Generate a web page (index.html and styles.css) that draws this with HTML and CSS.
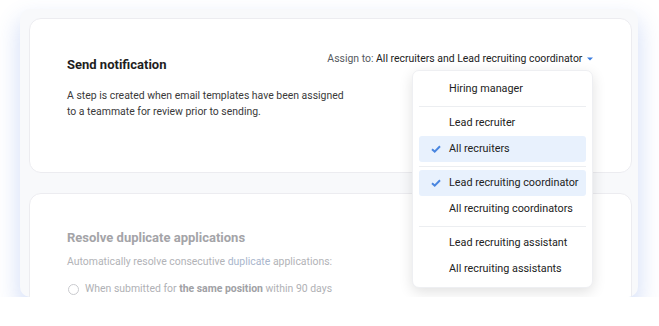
FILE: index.html
```html
<!DOCTYPE html>
<html lang="en">
  <head>
    <meta charset="UTF-8" />
    <meta name="viewport" content="width=device-width, initial-scale=1.0" />
    <title>Send notification</title>
    <link rel="stylesheet" href="styles.css">
  </head>
  <body>
    <div class="panel">
      <div class="card card-active">
        <div class="card-head">
          <h2 class="card-title">Send notification</h2>
          <div class="assign">
            <span class="assign-label">Assign to:</span>
            <span class="assign-value">All recruiters and Lead recruiting coordinator</span>
            <svg class="caret" width="6" height="4" viewBox="0 0 6 4"><path d="M0 0.5 H6 L3 3.5 Z" fill="#3b7de0"/></svg>

            <ul class="menu">
              <li class="menu-item">Hiring manager</li>
              <li class="menu-sep"></li>
              <li class="menu-item">Lead recruiter</li>
              <li class="menu-item selected">
                <svg class="check" width="10" height="8" viewBox="0 0 10 8"><path d="M1 4.2 L3.7 6.6 L9 1.2" fill="none" stroke="#4a86e0" stroke-width="2"/></svg>
                All recruiters
              </li>
              <li class="menu-sep"></li>
              <li class="menu-item selected">
                <svg class="check" width="10" height="8" viewBox="0 0 10 8"><path d="M1 4.2 L3.7 6.6 L9 1.2" fill="none" stroke="#4a86e0" stroke-width="2"/></svg>
                Lead recruiting coordinator
              </li>
              <li class="menu-item">All recruiting coordinators</li>
              <li class="menu-sep"></li>
              <li class="menu-item">Lead recruiting assistant</li>
              <li class="menu-item">All recruiting assistants</li>
            </ul>
          </div>
        </div>
        <p class="card-text">A step is created when email templates have been assigned<br>to a teammate for review prior to sending.</p>
      </div>

      <div class="card card-muted">
        <h2 class="card-title">Resolve duplicate applications</h2>
        <p class="card-text">Automatically resolve consecutive <span class="hl">duplicate</span> applications:</p>
        <label class="radio-row">
          <span class="radio"></span>
          <span>When submitted for <b>the same position</b> within 90 days</span>
        </label>
      </div>
    </div>
  </body>
</html>
```

FILE: styles.css
```css
* {
  box-sizing: border-box;
}
body {
  margin: 0;
  padding: 9px 21px 0 20px;
  background: #ffffff;
  font-family: Roboto, "Liberation Sans", sans-serif;
  font-size: 10.45px;
  color: #2a2a2a;
}
.panel {
  height: 288px;
  padding: 9px 6px 0 9px;
  background: #f8f9fb;
  border-radius: 10px;
  box-shadow: 0 12px 22px 2px rgba(85, 125, 225, 0.24);
  overflow: hidden;
}
.card {
  position: relative;
  background: #ffffff;
  border: 1px solid #ececf0;
  border-radius: 12px;
}
.card-active {
  height: 155px;
  padding: 32px 38px 0 37px;
  z-index: 2;
}
.card-muted {
  margin-top: 20px;
  height: 140px;
  padding: 36px 37px 0 37px;
}
.card-head {
  display: flex;
  justify-content: space-between;
  align-items: flex-start;
}
.card-title {
  margin: 6px 0 0;
  font-size: 13px;
  line-height: 16px;
  font-weight: 700;
  color: #1e1e1e;
}
.card-text {
  margin: 15px 0 0;
  line-height: 16px;
  color: #3a3a3a;
}
.assign {
  position: relative;
  line-height: 16px;
  white-space: nowrap;
}
.assign-label {
  color: #555a60;
}
.assign-value {
  color: #222;
}
.caret {
  margin-left: 2px;
  vertical-align: middle;
}
.menu {
  position: absolute;
  top: calc(100% + 3px);
  right: 0;
  width: 181px;
  margin: 0;
  padding: 5px 6px;
  list-style: none;
  background: #ffffff;
  border: 1px solid #eeeff2;
  border-radius: 7px;
  box-shadow: 0 4px 14px rgba(0, 0, 0, 0.12);
  font-size: 10.8px;
}
.menu-item {
  position: relative;
  height: 26px;
  line-height: 26px;
  padding-left: 30px;
  border-radius: 3px;
  color: #222;
}
.menu-item.selected {
  background: #e8f1fd;
}
.check {
  position: absolute;
  left: 12px;
  top: 9px;
}
.menu-sep {
  height: 1px;
  margin: 4px 0 3px;
  background: #eceef1;
}
.card-muted .card-title {
  margin: 0;
  color: #a4a4a8;
}
.card-muted .card-text {
  margin-top: 8px;
  color: #b2b3b7;
}
.hl {
  color: #a9b6cc;
}
.radio-row {
  display: flex;
  align-items: center;
  gap: 6px;
  margin-top: 11px;
  line-height: 16px;
  color: #b0b1b5;
}
.radio-row b {
  color: #a0a1a5;
}
.radio {
  width: 11px;
  height: 11px;
  margin-left: 1px;
  border: 1px solid #c9cace;
  border-radius: 50%;
  background: #fff;
}
```
